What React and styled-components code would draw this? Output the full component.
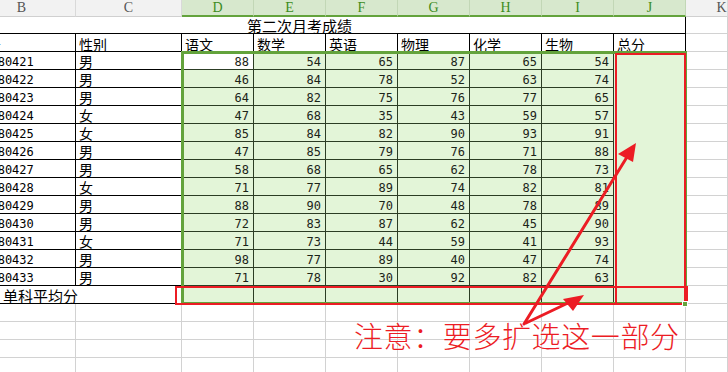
import * as React from "react";
import styled, { createGlobalStyle } from "styled-components";

const INK = "#000";
const DATA_LINE = "#2c3d24";
const GRID_LINE = "#d2d2d2";
const SEL_FILL = "#e3f5d8";
const SEL_GREEN = "#63a33c";
const RED = "#ec1c24";

const columns = ["B", "C", "D", "E", "F", "G", "H", "I", "J", "K"];
const subjects = ["语文", "数学", "英语", "物理", "化学", "生物", "总分"];

const students = [
  ["20180421", "男", 88, 54, 65, 87, 65, 54],
  ["20180422", "男", 46, 84, 78, 52, 63, 74],
  ["20180423", "男", 64, 82, 75, 76, 77, 65],
  ["20180424", "女", 47, 68, 35, 43, 59, 57],
  ["20180425", "女", 85, 84, 82, 90, 93, 91],
  ["20180426", "男", 47, 85, 79, 76, 71, 88],
  ["20180427", "男", 58, 68, 65, 62, 78, 73],
  ["20180428", "女", 71, 77, 89, 74, 82, 81],
  ["20180429", "男", 88, 90, 70, 48, 78, 89],
  ["20180430", "男", 72, 83, 87, 62, 45, 90],
  ["20180431", "女", 71, 73, 44, 59, 41, 93],
  ["20180432", "男", 98, 77, 89, 40, 47, 74],
  ["20180433", "男", 71, 78, 30, 92, 82, 63],
];

const GlobalStyle = createGlobalStyle`
  html, body {
    margin: 0;
    padding: 0;
    background: #ffffff;
  }
  body {
    font-family: "Noto Sans CJK SC", "Noto Sans", sans-serif;
  }
`;

const Sheet = styled.div`
  position: relative;
  width: 728px;
  height: 372px;
  overflow: hidden;
  background: #ffffff;
`;

// the sheet is scrolled a little to the right, so column B starts off-screen
const Grid = styled.div`
  display: grid;
  grid-template-columns: 108px 106px repeat(7, 72px) 42px;
  grid-template-rows: 17px 17px;
  grid-auto-rows: 18px;
  width: 760px;
  margin-left: -32px;
`;

const ColHead = styled.div`
  box-sizing: border-box;
  display: flex;
  align-items: center;
  justify-content: center;
  background: ${(p) => (p.$sel ? "#d7e8cd" : "#f2f2f2")};
  color: ${(p) => (p.$sel ? "#3d8c1c" : "#555555")};
  border-right: 1px solid ${(p) => (p.$sel ? "#c2d7b6" : "#d9d9d9")};
  border-bottom: ${(p) => (p.$sel ? `2px solid ${SEL_GREEN}` : "1px solid #d0d0d0")};
  font-family: "Liberation Serif", serif;
  font-size: 14px;
  line-height: 1;
  padding-left: ${(p) => p.$shift || 0}px;
`;

const Cell = styled.div`
  box-sizing: border-box;
  grid-column: span ${(p) => p.$span || 1};
  display: flex;
  align-items: center;
  justify-content: ${(p) =>
    p.$align === "right" ? "flex-end" : p.$align === "center" ? "center" : "flex-start"};
  padding: ${(p) => p.$pad || "0 2px"};
  background: ${(p) => p.$bg || "#ffffff"};
  border-right: 1px solid ${(p) => p.$line || GRID_LINE};
  border-bottom: 1px solid ${(p) => p.$under || p.$line || GRID_LINE};
  color: #000;
  font-size: 14px;
  line-height: 1;
  white-space: nowrap;
  overflow: hidden;
`;

const Num = styled(Cell)`
  font-family: "DejaVu Sans Mono", "Liberation Mono", monospace;
  font-size: 12px;
  color: #1c2418;
  padding: 3px 4px 0 0;
`;

const Id = styled.span`
  font-family: "DejaVu Sans Mono", "Liberation Mono", monospace;
  font-size: 12px;
  padding-top: 2px;
`;

const Title = styled(Cell)`
  font-size: 15px;
  padding: 1px 54px 0 0;
`;

const Overlay = styled.div`
  position: absolute;
  box-sizing: border-box;
  left: ${(p) => p.$x}px;
  top: ${(p) => p.$y}px;
  width: ${(p) => p.$w}px;
  height: ${(p) => p.$h}px;
  pointer-events: none;
`;

const Selection = styled(Overlay)`
  border: 3px solid ${SEL_GREEN};
`;

const Handle = styled(Overlay)`
  background: ${SEL_GREEN};
  border: 1px solid #ffffff;
`;

const RedBox = styled(Overlay)`
  border: 2px solid ${RED};
  border-right-width: ${(p) => p.$thick || 2}px;
`;

const Arrows = styled.svg`
  position: absolute;
  left: 0;
  top: 0;
  pointer-events: none;
`;

const Note = styled.div`
  position: absolute;
  left: 354px;
  top: 318px;
  color: ${RED};
  font-family: "Noto Sans CJK SC", sans-serif;
  font-size: 29px;
  font-weight: 300;
  line-height: 34px;
  letter-spacing: 0.6px;
  white-space: nowrap;
  text-shadow: 0 0 1px #ffffff;
`;

const App = () => {
  const blankRows = [0, 1, 2, 3, 4];
  return (
    <Sheet>
      <GlobalStyle />
      <Grid>
        {columns.map((c, i) => (
          <ColHead key={c} $sel={i >= 2 && i <= 8} $shift={i === 9 ? 30 : 0}>
            {c}
          </ColHead>
        ))}

        <Title $span={9} $line={INK} $align="center">
          第二次月考成绩
        </Title>
        <Cell />

        <Cell $line={INK} $pad="2px 0 0 5px">学号</Cell>
        <Cell $line={INK} $pad="2px 0 0 3px">性别</Cell>
        {subjects.map((s) => (
          <Cell key={s} $line={INK} $pad="2px 0 0 3px">
            {s}
          </Cell>
        ))}
        <Cell />

        {students.map((row, r) => (
          <React.Fragment key={row[0]}>
            <Cell $line={INK} $pad="0 0 0 8px">
              <Id>{row[0]}</Id>
            </Cell>
            <Cell $line={INK} $pad="1px 0 0 3px">{row[1]}</Cell>
            {row.slice(2).map((v, c) => (
              <Num
                key={c}
                $line={DATA_LINE}
                $bg={r === 0 && c === 0 ? "#ffffff" : SEL_FILL}
                $align="right"
              >
                {v}
              </Num>
            ))}
            <Cell $line={INK} $under={SEL_FILL} $bg={SEL_FILL} />
            <Cell />
          </React.Fragment>
        ))}

        <Cell $span={2} $line={INK} $pad="1px 0 0 35px" style={{ fontSize: 15 }}>
          单科平均分
        </Cell>
        {[0, 1, 2, 3, 4, 5].map((c) => (
          <Cell key={c} $line={DATA_LINE} $under={INK} $bg={SEL_FILL} />
        ))}
        <Cell $line={INK} $under={INK} $bg={SEL_FILL} />
        <Cell />

        {blankRows.map((r) => (
          <React.Fragment key={r}>
            {columns.map((c) => (
              <Cell key={c} />
            ))}
          </React.Fragment>
        ))}
      </Grid>

      <Selection $x={181} $y={51} $w={506} $h={254} />
      <RedBox $x={615} $y={53} $w={71} $h={252} />
      <RedBox $x={175} $y={286} $w={513} $h={19} $thick={4} />
      <Handle $x={682} $y={301} $w={6} $h={6} />

      <Arrows width="728" height="372" viewBox="0 0 728 372">
        <g stroke={RED} strokeWidth="3" strokeLinecap="round" fill="none">
          <line x1="524" y1="324" x2="627" y2="157" />
          <line x1="526" y1="323" x2="568" y2="303" />
        </g>
        <g fill={RED}>
          <polygon points="636,143 618,154 633,162" />
          <polygon points="584,295 563,299 573,311" />
        </g>
      </Arrows>

      <Note>注意：要多扩选这一部分</Note>
    </Sheet>
  );
};

export default App;
